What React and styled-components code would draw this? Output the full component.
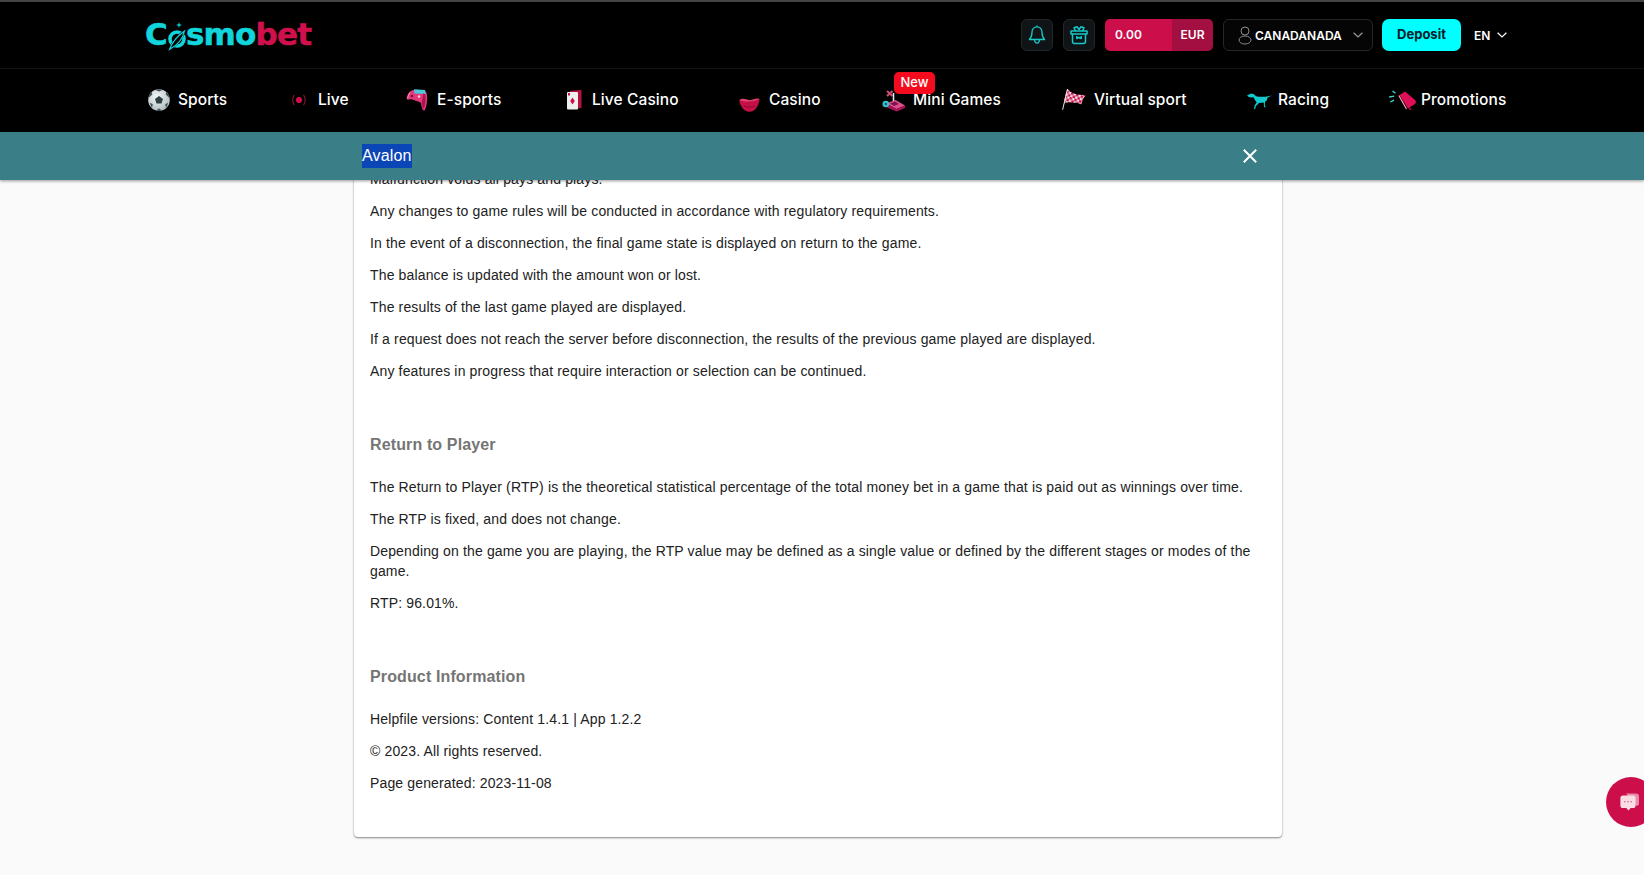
import React from 'react';
import styled, { createGlobalStyle } from 'styled-components';

const GlobalStyle = createGlobalStyle`
    html, body {
        margin: 0;
        height: 875px;
        overflow: hidden;
        background: #fafafa;
        font-family: "Liberation Sans", Arial, sans-serif;
    }
`;

const BellIcon = () => (
    <svg width="18" height="20" viewBox="0 0 18 20" fill="none" stroke="#16c9c9" strokeWidth="1.3" strokeLinejoin="round">
        <path d="M9 1.8c-3.2 0-5 2.5-5 5.500 0 3.600-.8 5.400-2.600 7.200h15.200c-1.800-1.800-2.600-3.600-2.600-7.200 0-3-1.800-5.500-5-5.500z" />
        <path d="M6.500 14.800c.2 2 1.200 3.400 2.500 3.400s2.300-1.400 2.500-3.400" />
        <path d="M9 .6v1.200" />
    </svg>
);

const BasketIcon = () => (
    <svg width="18" height="20" viewBox="0 0 18 20" fill="none" stroke="#16c9c9" strokeWidth="1.5" strokeLinejoin="round">
        <path d="M1 6h16v3H1z" />
        <path d="M2.500 9v7.500c0 1.200.8 2 2 2h9c1.200 0 2-.8 2-2V9" />
        <path d="M5.500 6 4 2.800 7 1.800 9 4.500l2-2.700 3 1L12.500 6" />
        <path d="M6.800 11v2.500l2.200-1 2.200 1V11" />
    </svg>
);

const UserIcon = () => (
    <svg width="14" height="19" viewBox="0 0 14 19" fill="none" stroke="#8b8b8b" strokeWidth="1">
        <circle cx="7" cy="5" r="4" />
        <ellipse cx="7" cy="14" rx="6" ry="4" />
    </svg>
);

const Chevron = ({ color }) => (
    <svg width="10" height="6" viewBox="0 0 10 6" fill="none" stroke={color} strokeWidth="1.200">
        <path d="M.6.8 5 5l4.400-4.200" />
    </svg>
);

const LogoRing = () => (
    <svg width="24" height="32" viewBox="0 0 24 32" fill="none">
        <circle cx="11" cy="18" r="7" stroke="#10d5dc" strokeWidth="3.600" />
        <path d="M2 30C5 21 11 13 20 8c-1.500 9-8 17-18 22z" fill="#000" />
        <path d="M3.500 28.500C6 21.500 11.500 15 18.500 10 17 17.500 11.500 24 3.500 28.500z" fill="none" stroke="#10d5dc" strokeWidth="1.200" />
        <path d="M13 1l.7 2.300L16 4l-2.300.7L13 7l-.7-2.300L10 4l2.300-.7z" fill="#10d5dc" />
    </svg>
);

const SportsIcon = () => (
    <svg width="22" height="22" viewBox="0 0 22 22">
        <defs>
            <radialGradient id="ball" cx="40%" cy="35%" r="70%">
                <stop offset="0" stopColor="#f4f6f6" />
                <stop offset="1" stopColor="#aebcc0" />
            </radialGradient>
        </defs>
        <circle cx="11" cy="11" r="10.800" fill="url(#ball)" />
        <path d="M11 7l4 2.900-1.500 4.600h-5L7 9.900z" fill="#2c4046" />
        <path d="M7.500 .9 11 2.500 14.500.9 11 .2zM1 8.500l3.300-3L3.600 2.800A11 11 0 0 0 .2 10zM21 8.500l-3.300-3 .7-2.700a11 11 0 0 1 3.400 7.200zM4 19l.8-3.800L2 13.800A11 11 0 0 0 4 19zM18 19l-.8-3.800 2.800-1.400A11 11 0 0 1 18 19zM8 21.600l3-2 3 2a11 11 0 0 1-6 0z" fill="#3c5157" />
    </svg>
);

const LiveIcon = () => (
    <svg width="14" height="14" viewBox="0 0 14 14" fill="none">
        <path d="M7 3.500l3.300 3.500L7 10.500 3.700 7z" fill="#d0104c" />
        <circle cx="7" cy="7" r="2.900" fill="#d0104c" />
        <path d="M2.500 1.800C.2 4.500.2 9.500 2.500 12.200M11.500 1.800c2.300 2.700 2.300 7.700 0 10.400" stroke="#7f1a3a" strokeWidth="1.100" />
    </svg>
);

const EsportsIcon = () => (
    <svg width="22" height="23" viewBox="0 0 22 23">
        <path d="M7 2 19 3c2 1 2.500 5 2 10-.5 5-1.500 9-3 9.500-1.500 0-2.500-3.500-3-7.500-2-1.500-5-2-7-3-3-1.500-5 0-7-.5C0 10 2 5 4 3.500z" fill="#e2397a" />
        <path d="M8 1.200 19 2l.6 4L8.500 5.500z" fill="#4ac9dc" />
        <path d="M17.500 5c1.800 1 2.300 4 1.900 8-.4 4-1 6.800-1.800 8-.8-.6-1.400-3.500-1.800-6.500z" fill="#a9124f" />
        <path d="M4 4.500C3 6 2 8 1.700 10.500" stroke="#f59ac0" strokeWidth="1" fill="none" />
        <circle cx="6" cy="8" r="1.300" fill="#7d0f3c" />
        <circle cx="13" cy="8.500" r="1.200" fill="#fbd4e2" />
    </svg>
);

const LiveCasinoIcon = () => (
    <svg width="15" height="20" viewBox="0 0 15 20">
        <path d="M3 .8 14.500 0v18l-4 .6z" fill="#b3123f" />
        <rect x="0" y="2" width="11" height="17.500" rx="1" fill="#eef0f0" />
        <path d="M5.500 7.500l2.300 3.500-2.300 3.500L3.200 11z" fill="#d0104c" />
        <rect x="1" y="3" width="2" height="2.500" fill="#d0104c" />
    </svg>
);

const CasinoIcon = () => (
    <svg width="21" height="15" viewBox="0 0 21 15">
        <path d="M.2 3C5 5 15 5 20.600 2 20 8 16.500 14.800 10.500 14.800 5 14.800 1 9 .2 3z" fill="#c50f46" />
        <path d="M.2 3C4 .5 7 2.500 10.500 3 14 3.300 17 .5 20.600 2 15 5.500 5 5.500.2 3z" fill="#e8406f" />
        <path d="M5 9c3.500 1.500 7.500 1.500 11 0" stroke="#80102f" strokeWidth="1" fill="none" />
    </svg>
);

const MiniGamesIcon = () => (
    <svg width="23" height="23" viewBox="0 0 23 23">
        <path d="M5 2l5.500 5M10.500 2 5 7" stroke="#c84a6e" strokeWidth="2.200" />
        <path d="M11.500 4v10" stroke="#e9eef0" strokeWidth="1.500" />
        <path d="M4 14.500l9.500-3.500 9.500 5.500-8.500 3.500z" fill="#e0508c" />
        <path d="M4 14.500V18l10.500 4.500L23 19v-2.500L14.500 20z" fill="#a8155a" />
        <path d="M8 14.500l5-2 4 2.500-5 2z" fill="#7a1550" />
        <circle cx="3.800" cy="15" r="3.300" fill="#38c4cf" />
        <circle cx="3.800" cy="15" r="1.300" fill="#0a5f66" />
    </svg>
);

const FlagIcon = () => (
    <svg width="24" height="21" viewBox="0 0 24 21">
        <defs>
            <pattern id="checks" width="5" height="5" patternUnits="userSpaceOnUse" patternTransform="rotate(18)">
                <rect width="5" height="5" fill="#f6dfe6" />
                <rect width="2.500" height="2.500" fill="#c50f46" />
                <rect x="2.500" y="2.500" width="2.500" height="2.500" fill="#c50f46" />
            </pattern>
        </defs>
        <path d="M5.500 0c2 2.500 5 4 8 5 3 1 6.500.8 10.500 1.500-2.500 2-3.500 4.500-4.500 9-3.500-2-9-2-14.500-2C3 13.500 2.300 14 2 15 2.500 9 3.500 4 5.500 0z" fill="url(#checks)" />
        <path d="M5.500 0 .6 20.800" stroke="#f0e6e8" strokeWidth="1" />
    </svg>
);

const HorseIcon = () => (
    <svg width="25" height="17" viewBox="0 0 25 17">
        <path d="M0 2.600 4 .4 6 1c1.500 0 2 2 4 2.500 2.500.5 6 .3 8.500.3L25 2.500l-4.500 2c-.2 2-.6 3.500-2.500 4.300l-.2 3.700 1 2-1.800-.5-.3-4.500-4.700.5-3 3-1 3.200-1-.5.7-3.400 2-2.800C8.500 8 7.300 6 6.500 4.300L3.500 4.500 1.800 4z" fill="#12c9cf" />
    </svg>
);

const PromoIcon = () => (
    <svg width="28" height="20" viewBox="0 0 28 20">
        <path d="M10.500 5 16 1.500l10 8.500c1.700 1.600 1 3.300-.6 4.300L19 18.500z" fill="#e00f57" />
        <path d="M9.800 5.500 17.500 19" stroke="#f3a9c2" strokeWidth="1.200" />
        <path d="M20 17.500l1 2 1.500-1" stroke="#a30f40" strokeWidth="1.200" fill="none" />
        <path d="M3.500 1 6.500 3.200M.2 7l5-.9M1.300 12l3.700-1.900" stroke="#40d5cf" strokeWidth="1.400" />
    </svg>
);

const ChatIcon = () => (
    <svg width="20" height="20" viewBox="0 0 20 20">
        <path d="M6 1.500h10c2 0 3 1 3 3v7c0 1.500-1 2.500-2.500 2.500z" fill="#e88ca8" />
        <path d="M3 3.500h10c1.700 0 2.600 1 2.600 2.600v7.300c0 1.700-.9 2.600-2.600 2.600h-2.300L8.500 18.500 6.300 16H3C1.300 16 .4 15.100.4 13.400V6.100C.4 4.500 1.300 3.500 3 3.500z" fill="#fbdde6" />
        <circle cx="4.800" cy="9.800" r=".8" fill="#c9637f" />
        <circle cx="8" cy="9.800" r=".8" fill="#c9637f" />
        <circle cx="11.200" cy="9.800" r=".8" fill="#c9637f" />
    </svg>
);

// width: the whole cell, iconWidth: where the label starts inside it
const navItems = [
    { label: 'Sports', icon: <SportsIcon />, width: 144, iconWidth: 30 },
    { label: 'Live', icon: <LiveIcon />, width: 114, iconWidth: 26 },
    { label: 'E-sports', icon: <EsportsIcon />, width: 161, iconWidth: 31 },
    { label: 'Live Casino', icon: <LiveCasinoIcon />, width: 172, iconWidth: 25 },
    { label: 'Casino', icon: <CasinoIcon />, width: 143, iconWidth: 30, drop: 5 },
    { label: 'Mini Games', icon: <MiniGamesIcon />, width: 180, iconWidth: 31, isNew: true, drop: 1 },
    { label: 'Virtual sport', icon: <FlagIcon />, width: 185, iconWidth: 32 },
    { label: 'Racing', icon: <HorseIcon />, width: 142, iconWidth: 31, drop: 2 },
    { label: 'Promotions', icon: <PromoIcon />, width: 119, iconWidth: 32 },
];

const sections = [
    {
        paragraphs: [
            'Malfunction voids all pays and plays.',
            'Any changes to game rules will be conducted in accordance with regulatory requirements.',
            'In the event of a disconnection, the final game state is displayed on return to the game.',
            'The balance is updated with the amount won or lost.',
            'The results of the last game played are displayed.',
            'If a request does not reach the server before disconnection, the results of the previous game played are displayed.',
            'Any features in progress that require interaction or selection can be continued.',
        ],
    },
    {
        title: 'Return to Player',
        paragraphs: [
            'The Return to Player (RTP) is the theoretical statistical percentage of the total money bet in a game that is paid out as winnings over time.',
            'The RTP is fixed, and does not change.',
            'Depending on the game you are playing, the RTP value may be defined as a single value or defined by the different stages or modes of the game.',
            'RTP: 96.01%.',
        ],
    },
    {
        title: 'Product Information',
        paragraphs: [
            'Helpfile versions: Content 1.4.1 | App 1.2.2',
            '© 2023. All rights reserved.',
            'Page generated: 2023-11-08',
        ],
    },
];

export default function App() {
    return (
        <>
            <GlobalStyle />
            <Header>
                <TopRow>
                    <Logo>
                        <Cyan>C</Cyan>
                        <LogoMark><LogoRing /></LogoMark>
                        <Cyan>smo</Cyan>
                        <Crimson>bet</Crimson>
                    </Logo>
                    <Actions>
                        <IconButton><BellIcon /></IconButton>
                        <IconButton><BasketIcon /></IconButton>
                        <Balance>
                            <Amount>0.00</Amount>
                            <Currency>EUR</Currency>
                        </Balance>
                        <UserButton>
                            <UserIcon />
                            <UserName>CANADANADA</UserName>
                            <Chevron color="#9a9a9a" />
                        </UserButton>
                        <Deposit>Deposit</Deposit>
                        <Language>
                            EN
                            <Chevron color="#ffffff" />
                        </Language>
                    </Actions>
                </TopRow>
                <Nav>
                    {navItems.map(item => (
                        <NavItem key={item.label} $width={item.width}>
                            <NavIcon $width={item.iconWidth} $drop={item.drop}>{item.icon}</NavIcon>
                            {item.label}
                            {item.isNew && <NewBadge>New</NewBadge>}
                        </NavItem>
                    ))}
                </Nav>
            </Header>
            <TitleBar>
                <TitleInner>
                    <SelectedTitle>Avalon</SelectedTitle>
                    <CloseButton>
                        <svg width="14" height="14" viewBox="0 0 14 14" stroke="#ffffff" strokeWidth="2" fill="none">
                            <path d="M.8.8l12.400 12.400M13.200.8.8 13.200" />
                        </svg>
                    </CloseButton>
                </TitleInner>
            </TitleBar>
            <Card>
                {sections.map(section => (
                    <Section key={section.title || 'intro'}>
                        {section.title && <Heading>{section.title}</Heading>}
                        {section.paragraphs.map(p => <Paragraph key={p}>{p}</Paragraph>)}
                    </Section>
                ))}
            </Card>
            <ChatButton><ChatIcon /></ChatButton>
        </>
    );
}

const Header = styled.header`
    position: relative;
    z-index: 3;
    background: #000;
    border-top: 2px solid #444;
    font-family: Inter, "Liberation Sans", sans-serif;
`;

const TopRow = styled.div`
    height: 67px;
    box-sizing: border-box;
    padding: 0 137px 0 145px;
    display: flex;
    align-items: center;
    justify-content: space-between;
    border-bottom: 1px solid #151515;
`;

const Logo = styled.div`
    display: flex;
    align-items: baseline;
    padding-bottom: 2px;
    font-family: "DejaVu Sans", sans-serif;
    font-size: 31px;
    font-weight: 700;
    letter-spacing: -0.8px;
    line-height: 36px;
    -webkit-text-stroke: 0.5px currentColor;
`;

const Cyan = styled.span`
    color: #10d5dc;
`;

const Crimson = styled.span`
    color: #d0104c;
`;

const LogoMark = styled.span`
    width: 20px;
    height: 32px;
    margin-left: -1px;
    align-self: flex-end;
    margin-bottom: -1px;
`;

const Actions = styled.div`
    display: flex;
    align-items: center;
`;

const IconButton = styled.div`
    width: 32px;
    height: 32px;
    margin-right: 10px;
    box-sizing: border-box;
    display: flex;
    align-items: center;
    justify-content: center;
    background: #101416;
    border: 1px solid #22282a;
    border-radius: 6px;
`;

const Balance = styled.div`
    width: 108px;
    height: 32px;
    margin-right: 10px;
    display: flex;
    border-radius: 5px;
    overflow: hidden;
    font-size: 12px;
    font-weight: 600;
    color: #fff;
`;

const Amount = styled.div`
    width: 67px;
    padding-left: 10px;
    box-sizing: border-box;
    line-height: 32px;
    background: #cc0f4b;
`;

const Currency = styled.div`
    flex: 1;
    text-align: center;
    line-height: 32px;
    background: #a30f40;
`;

const UserButton = styled.div`
    width: 150px;
    height: 32px;
    margin-right: 9px;
    box-sizing: border-box;
    padding: 0 9px 0 14px;
    display: flex;
    align-items: center;
    background: #050505;
    border: 1px solid #262626;
    border-radius: 6px;
`;

const UserName = styled.span`
    flex: 1;
    margin-left: 3px;
    font-size: 12px;
    font-weight: 600;
    color: #fff;
`;

const Deposit = styled.div`
    width: 79px;
    height: 32px;
    line-height: 31px;
    text-align: center;
    background: #00ffff;
    border-radius: 7px;
    font-size: 13px;
    font-weight: 700;
    color: #07202a;
`;

const Language = styled.div`
    margin-left: 13px;
    width: 33px;
    display: flex;
    align-items: center;
    justify-content: space-between;
    font-size: 12px;
    font-weight: 600;
    color: #fff;
`;

const Nav = styled.nav`
    height: 63px;
    box-sizing: border-box;
    padding: 0 0 2px 148px;
    display: flex;
    align-items: center;
`;

const NavItem = styled.div`
    position: relative;
    flex: none;
    width: ${p => p.$width}px;
    display: flex;
    align-items: center;
    font-size: 15.500px;
    font-weight: 500;
    letter-spacing: 0.1px;
    color: #fff;
    white-space: nowrap;
`;

const NavIcon = styled.span`
    flex: none;
    width: ${p => p.$width}px;
    display: flex;
    position: relative;
    top: ${p => p.$drop || 0}px;
`;

const NewBadge = styled.span`
    position: absolute;
    left: 12px;
    top: -16px;
    width: 41px;
    height: 22px;
    line-height: 21px;
    text-align: center;
    background: #f40b1d;
    border-radius: 5px;
    font-size: 13px;
    font-weight: 500;
    letter-spacing: 0;
`;

const TitleBar = styled.div`
    position: relative;
    z-index: 2;
    height: 48px;
    background: #3a7f88;
    box-shadow: 0 1px 3px rgba(0, 0, 0, 0.4);
`;

const TitleInner = styled.div`
    width: 928px;
    height: 100%;
    margin: 0 auto 0 354px;
    box-sizing: border-box;
    padding: 0 25px 0 8px;
    display: flex;
    align-items: center;
    justify-content: space-between;
`;

const SelectedTitle = styled.span`
    font-size: 16px;
    line-height: 24px;
    letter-spacing: 0.15px;
    color: #fff;
    background: #0b46b6;
`;

const CloseButton = styled.span`
    display: flex;
`;

const Card = styled.main`
    position: relative;
    z-index: 1;
    width: 928px;
    margin: -11px 0 0 354px;
    box-sizing: border-box;
    padding: 0 16px 32px;
    background: #fff;
    border-radius: 0 0 4px 4px;
    box-shadow: 0 1px 2px rgba(0, 0, 0, 0.45), 0 0 2px rgba(0, 0, 0, 0.1);
`;

const Section = styled.section`
    & + & {
        margin-top: 54px;
    }
`;

const Heading = styled.h2`
    margin: 0 0 22px;
    font-size: 16px;
    line-height: 20px;
    font-weight: 700;
    letter-spacing: 0.13px;
    color: #757575;
`;

const Paragraph = styled.p`
    margin: 0 0 12px;
    font-size: 14px;
    line-height: 20px;
    letter-spacing: 0.145px;
    color: #212121;
`;

const ChatButton = styled.div`
    position: fixed;
    right: -12px;
    top: 777px;
    z-index: 4;
    width: 50px;
    height: 50px;
    box-sizing: border-box;
    padding-left: 14px;
    display: flex;
    align-items: center;
    background: #cc0f4b;
    border-radius: 50%;
`;
